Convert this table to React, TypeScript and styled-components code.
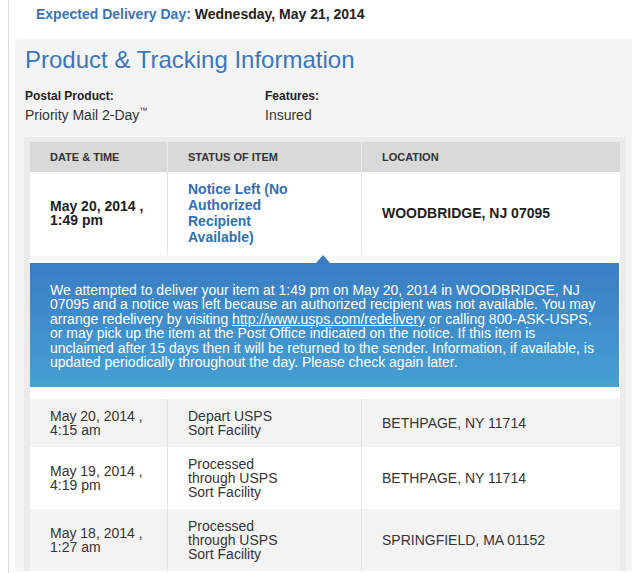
import React from 'react';
import styled, { createGlobalStyle } from 'styled-components';

const GlobalStyle = createGlobalStyle`
  html, body {
    margin: 0;
    padding: 0;
    background: #ffffff;
    overflow: hidden;
  }
  body {
    font-family: "Liberation Sans", Arial, Helvetica, sans-serif;
    color: #333333;
  }
`;

const Shell = styled.div`
  margin-left: 8px;
  border-left: 1px solid #dcdcdc;
  padding-left: 6px;
  height: 573px;
  overflow: hidden;
`;

const DeliveryBar = styled.div`
  box-sizing: border-box;
  height: 39px;
  padding: 6px 0 0 21px;
  font-size: 14px;
  line-height: 16px;
  font-weight: bold;
  color: #222222;
`;

const DeliveryLabel = styled.span`
  color: #3b73b3;
`;

const Panel = styled.section`
  background: #f5f4f5;
  border-radius: 5px 0 0 0;
  padding: 7px 6px 0 9px;
`;

const Title = styled.h2`
  margin: 0;
  padding-left: 1px;
  font-size: 24px;
  line-height: 28px;
  font-weight: normal;
  color: #3b77b9;
`;

const Meta = styled.div`
  display: flex;
  margin-top: 15px;
  padding-left: 1px;
`;

const MetaGroup = styled.div<{ $width?: number }>`
  width: ${(p) => (p.$width ? `${p.$width}px` : 'auto')};
`;

const MetaLabel = styled.div`
  font-size: 12px;
  line-height: 14px;
  font-weight: bold;
  color: #222222;
`;

const MetaValue = styled.div`
  margin-top: 3px;
  font-size: 14px;
  line-height: 18px;
  color: #333333;
  sup {
    font-size: 8px;
    line-height: 0;
    vertical-align: 7px;
  }
`;

const Table = styled.div`
  margin-top: 13px;
  border: 6px solid #ebebeb;
  border-top-width: 5px;
  border-bottom: none;
  background: #ffffff;
`;

type Tone = 'header' | 'white' | 'grey';

const Row = styled.div<{ $tone: Tone }>`
  display: grid;
  grid-template-columns: 137px 194px 1fr;
  background: ${(p) =>
    p.$tone === 'header' ? '#d9d9d9' : p.$tone === 'grey' ? '#f3f3f3' : '#ffffff'};
`;

type Col = 'date' | 'status' | 'location';

const Cell = styled.div<{ $col: Col; $head?: boolean; $pad?: string }>`
  box-sizing: border-box;
  display: flex;
  align-items: center;
  border-left: ${(p) =>
    p.$col === 'date' ? 'none' : `1px solid ${p.$head ? '#e9e9e9' : '#e3e3e3'}`};
  padding: ${(p) => p.$pad ?? '10px 0'};
  padding-left: 20px;
  padding-right: ${(p) => (p.$col === 'date' ? '12px' : p.$col === 'status' ? '67px' : '10px')};
`;

const HeadText = styled.span`
  font-size: 11px;
  line-height: 30px;
  font-weight: bold;
  text-transform: uppercase;
  color: #333333;
`;

const CellText = styled.div<{ $strong?: boolean; $link?: boolean; $lh?: number }>`
  font-size: 14px;
  line-height: ${(p) => p.$lh ?? 14}px;
  font-weight: ${(p) => (p.$strong ? 'bold' : 'normal')};
  color: ${(p) => (p.$link ? '#336fae' : p.$strong ? '#1e1e1e' : '#333333')};
`;

const Expanded = styled.div`
  background: #ffffff;
`;

const Detail = styled.div`
  padding: 8px 1px 12px 0;
`;

const Bubble = styled.div`
  position: relative;
  padding: 20px 20px 18px 20px;
  background: linear-gradient(to bottom, #3a7dc3 0%, #45a0d3 100%);
  color: #ffffff;
  font-size: 14px;
  line-height: 14.4px;

  &::before {
    content: '';
    position: absolute;
    top: -8px;
    left: 286px;
    border-left: 7px solid transparent;
    border-right: 7px solid transparent;
    border-bottom: 8px solid #3a7dc3;
  }

  a {
    color: #ffffff;
    text-decoration: underline;
  }
`;

type Event = {
  date: string;
  time: string;
  status: string;
  location: string;
};

const events: Event[] = [
  { date: 'May 20, 2014 ,', time: '4:15 am', status: 'Depart USPS Sort Facility', location: 'BETHPAGE, NY 11714' },
  { date: 'May 19, 2014 ,', time: '4:19 pm', status: 'Processed through USPS Sort Facility', location: 'BETHPAGE, NY 11714' },
  { date: 'May 18, 2014 ,', time: '1:27 am', status: 'Processed through USPS Sort Facility', location: 'SPRINGFIELD, MA 01152' },
];

export default function App() {
  return (
    <>
      <GlobalStyle />
      <Shell>
        <DeliveryBar>
          <DeliveryLabel>Expected Delivery Day:</DeliveryLabel> Wednesday, May 21, 2014
        </DeliveryBar>
        <Panel>
          <Title>Product &amp; Tracking Information</Title>
          <Meta>
            <MetaGroup $width={240}>
              <MetaLabel>Postal Product:</MetaLabel>
              <MetaValue>
                Priority Mail 2-Day<sup>™</sup>
              </MetaValue>
            </MetaGroup>
            <MetaGroup>
              <MetaLabel>Features:</MetaLabel>
              <MetaValue>Insured</MetaValue>
            </MetaGroup>
          </Meta>
          <Table>
            <Row $tone="header">
              <Cell $col="date" $head $pad="0">
                <HeadText>Date &amp; Time</HeadText>
              </Cell>
              <Cell $col="status" $head $pad="0">
                <HeadText>Status of Item</HeadText>
              </Cell>
              <Cell $col="location" $head $pad="0">
                <HeadText>Location</HeadText>
              </Cell>
            </Row>
            <Expanded>
              <Row $tone="white">
                <Cell $col="date" $pad="9px 0 10px">
                  <CellText $strong>
                    May 20, 2014 , 1:49 pm
                  </CellText>
                </Cell>
                <Cell $col="status" $pad="9px 0 10px">
                  <CellText $strong $link $lh={16}>
                    Notice Left (No Authorized Recipient Available)
                  </CellText>
                </Cell>
                <Cell $col="location" $pad="9px 0 10px">
                  <CellText $strong>WOODBRIDGE, NJ 07095</CellText>
                </Cell>
              </Row>
              <Detail>
                <Bubble>
                  We attempted to deliver your item at 1:49 pm on May 20, 2014 in WOODBRIDGE, NJ 07095 and a
                  notice was left because an authorized recipient was not available. You may arrange redelivery
                  by visiting <a href="#redelivery">http://www.usps.com/redelivery</a> or calling 800-ASK-USPS, or
                  may pick up the item at the Post Office indicated on the notice. If this item is unclaimed after
                  15 days then it will be returned to the sender. Information, if available, is updated
                  periodically throughout the day. Please check again later.
                </Bubble>
              </Detail>
            </Expanded>
            {events.map((e, i) => (
              <Row key={i} $tone={i % 2 === 0 ? 'grey' : 'white'}>
                <Cell $col="date">
                  <CellText>
                    {e.date} {e.time}
                  </CellText>
                </Cell>
                <Cell $col="status">
                  <CellText>{e.status}</CellText>
                </Cell>
                <Cell $col="location">
                  <CellText>{e.location}</CellText>
                </Cell>
              </Row>
            ))}
          </Table>
        </Panel>
      </Shell>
    </>
  );
}
